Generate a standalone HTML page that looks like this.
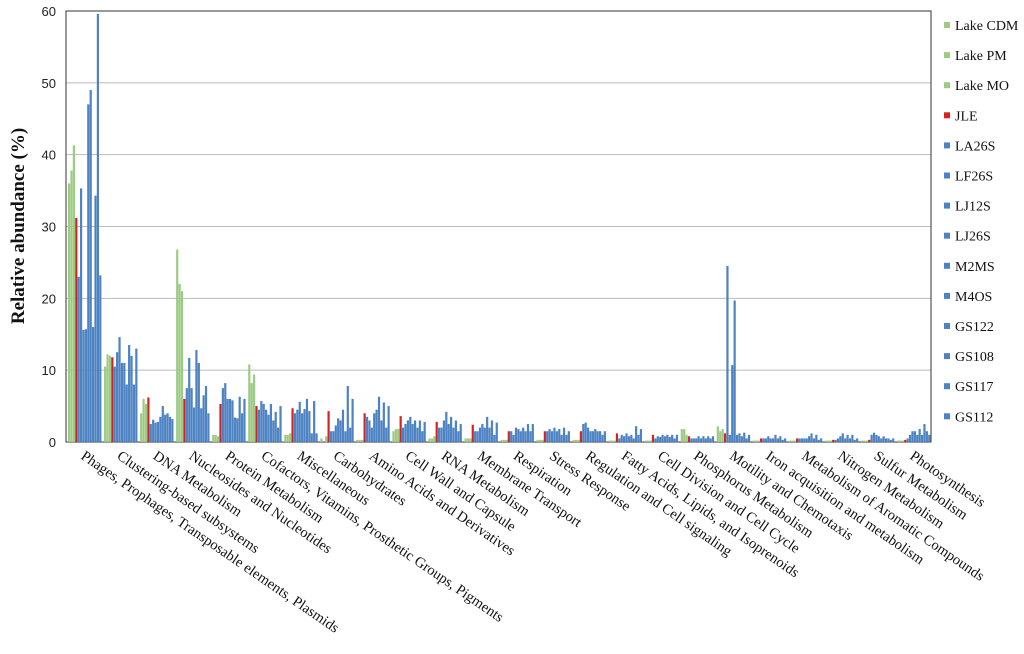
<!DOCTYPE html>
<html><head><meta charset="utf-8">
<style>
body{margin:0;background:#fff;width:1024px;height:654px;overflow:hidden;position:relative;font-family:"Liberation Serif",serif}
svg{position:absolute;left:0;top:0}
</style></head><body>
<svg id="s" width="1024" height="654" xmlns="http://www.w3.org/2000/svg"></svg>
<script>
var d=[
[36,37.8,41.3,31.2,23,35.3,15.6,15.7,47,49,16,34.3,59.6,23.2],
[10.5,12.2,12,11.8,10.5,12.5,14.6,11,11,8,13.5,12,8,13],
[4,6,5.3,6.2,2.5,3.1,2.7,2.8,3.5,5,3.8,4,3.5,3.2],
[26.8,22,21,6,7.5,11.7,7.5,4.8,12.8,11,4.7,6.5,7.8,4],
[1,1,0.8,5.3,7.5,8.2,6,6,5.8,3.4,3.3,6.3,4,6],
[10.8,8.2,9.4,5,4.5,5.7,5.3,4.5,3.8,5.3,3,4.2,2,5],
[1,1,1.2,4.7,4,4.5,5.6,4,4.6,6,4.3,1.2,5.7,1.2],
[0.5,0,0.8,4.3,1.5,1.5,2.3,3.3,3,4.5,1.5,7.8,2,6],
[0.3,0.3,0.3,4,3.5,3,2,4,4.5,6.3,3,5.5,2,5],
[1.5,1.8,1.8,3.6,2,2.5,3,3.5,2.5,3,2,3,1.5,2.8],
[0.5,0.5,0.8,2.8,2,2,3,4.2,2.5,3.5,2,3,1.5,2.5],
[0.5,0.5,0.5,2.4,1.5,1.5,2,2.5,2,3.5,2,3,1,2.7],
[0.3,0.3,0.3,1.5,1.5,1,2,1.8,1.5,2,1.5,2.5,1.5,2.5],
[0.3,0.3,0.3,1.5,1.5,1.8,1.5,2,1.5,1.8,1,2,1,1.5],
[0.3,0.3,0.3,1.5,2.5,2.7,2,1.5,1.5,1.8,1.5,1.5,1,1.5],
[0.2,0.2,0.2,1.2,0.5,1,0.8,1.2,0.8,1,0.5,2.2,1,1.8],
[0.2,0.2,0.2,1,0.5,0.8,0.7,1,0.8,1,0.7,1,0.5,1],
[1.8,1.8,1,0.8,0.5,0.5,0.5,0.8,0.5,0.8,0.5,0.8,0.5,0.8],
[2.2,1.5,1.8,1.2,24.5,1,10.7,19.7,1,1.2,0.8,1.3,0.5,1],
[0.2,0.2,0.2,0.5,0.5,0.5,0.8,0.5,0.5,1,0.5,0.8,0.3,0.5],
[0.2,0.2,0.2,0.5,0.5,0.5,0.5,0.5,0.8,1.2,0.5,1,0.3,0.5],
[0.2,0.2,0.2,0.3,0.3,0.5,0.8,1.2,0.5,1,0.5,1,0.3,0.5],
[0.2,0.2,0.2,0.3,1,1.3,1,0.8,0.5,0.8,0.5,0.5,0.3,0.5],
[0.2,0.2,0.2,0.3,0.5,1,1.5,1.5,1,1.8,1,2.5,1.5,1]];
var labels=["Phages, Prophages, Transposable elements, Plasmids","Clustering-based subsystems","DNA Metabolism","Nucleosides and Nucleotides","Protein Metabolism","Cofactors, Vitamins, Prosthetic Groups, Pigments","Miscellaneous","Carbohydrates","Amino Acids and Derivatives","Cell Wall and Capsule","RNA Metabolism","Membrane Transport","Respiration","Stress Response","Regulation and Cell signaling","Fatty Acids, Lipids, and Isoprenoids","Cell Division and Cell Cycle","Phosphorus Metabolism","Motility and Chemotaxis","Iron acquisition and metabolism","Metabolism of Aromatic Compounds","Nitrogen Metabolism","Sulfur Metabolism","Photosynthesis"];
var leg=["Lake CDM","Lake PM","Lake MO","JLE","LA26S","LF26S","LJ12S","LJ26S","M2MS","M4OS","GS122","GS108","GS117","GS112"];
function col(i){return i<3?"#9ccb84":i==3?"#d42323":"#4d82c3";}
var L=66,R=931,T=11,B=442,k=(B-T)/60,h="";
for(var g=0;g<=6;g++){var y=B-g*10*k;h+='<line x1="'+L+'" x2="'+R+'" y1="'+y+'" y2="'+y+'" stroke="'+(g==0?"#888":"#bbb")+'" stroke-width="1"/>';
h+='<text x="56" y="'+(y+5)+'" text-anchor="end" font-family="Liberation Sans,sans-serif" font-size="13" fill="#222">'+g*10+'</text>';}
h+='<rect x="'+L+'" y="'+T+'" width="'+(R-L)+'" height="'+(B-T)+'" fill="none" stroke="#333" stroke-width="1"/>';
var gw=(R-L)/24;
for(var c=0;c<24;c++){var x0=L+2+c*gw;for(var i=0;i<14;i++){var v=d[c][i],hh=v*k;
h+='<rect x="'+(x0+i*2.4).toFixed(2)+'" y="'+(B-hh).toFixed(2)+'" width="2.2" height="'+hh.toFixed(2)+'" fill="'+col(i)+'"/>';}
var lx=L+c*gw+gw/2-4;
h+='<text transform="translate('+lx+',458) rotate(34.5)" font-size="14.6" fill="#111">'+labels[c]+'</text>';}
for(var i=0;i<14;i++){var y=25+i*30.1;h+='<rect x="944" y="'+(y-3)+'" width="6" height="6" fill="'+(i<3?"#9ccb84":i==3?"#d42323":"#4d82c3")+'"/><text x="955" y="'+(y+5)+'" font-size="14" fill="#111">'+leg[i]+'</text>';}
h+='<text transform="translate(24,226) rotate(-90)" text-anchor="middle" font-size="19" font-weight="bold" fill="#111">Relative abundance (%)</text>';
document.getElementById("s").innerHTML=h;
</script>
</body></html>
